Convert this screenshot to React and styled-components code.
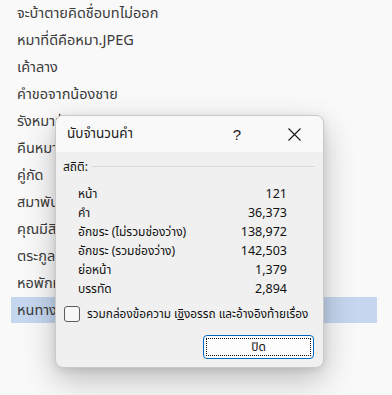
import React from "react";
import styled, { createGlobalStyle } from "styled-components";

const Global = createGlobalStyle`
  html, body { margin: 0; padding: 0; background: #f9f9f9; }
  body { font-family: "Noto Sans", "Noto Sans Thai", "Leelawadee UI", Tahoma, sans-serif; }
`;

const Page = styled.div`
  position: relative;
  width: 392px;
  height: 395px;
  overflow: hidden;
  background: #f9f9f9;
`;

const List = styled.ul`
  list-style: none;
  margin: 0;
  padding: 0 15px 0 11px;
  display: flex;
  flex-direction: column;
`;

const Item = styled.li`
  height: ${(p) => (p.$selected ? 26 : 27)}px;
  display: flex;
  align-items: center;
  padding-left: 6px;
  font-size: 14.5px;
  color: #3b3b3b;
  background: ${(p) => (p.$selected ? "#c5d7ef" : "transparent")};
  box-sizing: border-box;
`;

const Dialog = styled.div`
  position: absolute;
  left: 55px;
  top: 115px;
  width: 269px;
  height: 253px;
  box-sizing: border-box;
  border: 1px solid #c9c9c9;
  border-radius: 8px;
  background: #f0f0f0;
  box-shadow: 0 12px 32px rgba(0, 0, 0, 0.24), 0 2px 8px rgba(0, 0, 0, 0.1);
  display: flex;
  flex-direction: column;
  overflow: hidden;
`;

const TitleBar = styled.div`
  height: 36px;
  flex: none;
  background: #f9f9f9;
  display: flex;
  align-items: center;
  padding-left: 11px;
`;

const Title = styled.div`
  flex: 1;
  font-size: 13.5px;
  color: #1a1a1a;
`;

const TitleButton = styled.div`
  width: 46px;
  height: 36px;
  display: flex;
  align-items: center;
  justify-content: center;
  color: #1a1a1a;
  font-family: "Liberation Sans", sans-serif;
  font-size: 15px;
  margin-right: ${(p) => p.$mr}px;
`;

const Body = styled.div`
  flex: 1;
  display: flex;
  flex-direction: column;
  padding: 6px 8px 8px 7px;
`;

const SectionHeader = styled.div`
  display: flex;
  align-items: center;
  gap: 4px;
  height: 17px;
  font-size: 12px;
  color: #111;
  &::after {
    content: "";
    flex: 1;
    height: 1px;
    background: #d9d9d9;
  }
`;

const Stats = styled.div`
  display: flex;
  flex-direction: column;
  padding: 9px 28px 0 15px;
`;

const StatRow = styled.div`
  display: flex;
  justify-content: space-between;
  align-items: center;
  height: 19px;
  font-size: 12px;
  color: #111;
`;

const Num = styled.span`
  font-family: "Noto Sans", "Open Sans", sans-serif;
  font-size: 12.5px;
`;

const CheckRow = styled.label`
  display: flex;
  align-items: center;
  gap: 7px;
  margin-top: 7px;
  padding-left: 1px;
  font-size: 11.8px;
  color: #111;
  white-space: nowrap;
`;

const Box = styled.span`
  width: 16px;
  height: 16px;
  box-sizing: border-box;
  border: 1px solid #5b5b5b;
  border-radius: 3px;
  background: #f7f7f7;
  flex: none;
`;

const Under = styled.span`
  text-decoration: underline;
`;

const Footer = styled.div`
  display: flex;
  justify-content: flex-end;
  margin-top: auto;
  padding-right: 1px;
`;

const Button = styled.div`
  width: 111px;
  height: 24px;
  box-sizing: border-box;
  border: 1px solid #0067c0;
  border-radius: 4px;
  background: #fdfdfd;
  padding: 2px;
  display: flex;
`;

const Focus = styled.span`
  flex: 1;
  border: 1px dotted #111;
  display: flex;
  align-items: center;
  justify-content: center;
  font-size: 12px;
  color: #111;
`;

const items = [
  "จะบ้าตายคิดชื่อบทไม่ออก",
  "หมาที่ดีคือหมา.JPEG",
  "เค้าลาง",
  "คำขอจากน้องชาย",
  "รังหมาป่า",
  "คืนหมาป่า",
  "คู่กัด",
  "สมาพันธ์",
  "คุณมีสิทธิ์",
  "ตระกูลหมา",
  "หอพักหมา",
  "หนทางสู่ความตาย",
];

const stats = [
  ["หน้า", "121"],
  ["คำ", "36,373"],
  ["อักขระ (ไม่รวมช่องว่าง)", "138,972"],
  ["อักขระ (รวมช่องว่าง)", "142,503"],
  ["ย่อหน้า", "1,379"],
  ["บรรทัด", "2,894"],
];

export default function App() {
  return (
    <Page>
      <Global />
      <List>
        {items.map((t, i) => (
          <Item key={i} $selected={i === 11}>
            {t}
          </Item>
        ))}
      </List>
      <Dialog>
        <TitleBar>
          <Title>นับจำนวนคำ</Title>
          <TitleButton $mr={11}>?</TitleButton>
          <TitleButton $mr={6}>
            <svg width="13" height="13" viewBox="0 0 13 13">
              <path d="M0.5 0.5 L12.5 12.5 M12.5 0.5 L0.5 12.5" stroke="#1a1a1a" strokeWidth="1.1" fill="none" />
            </svg>
          </TitleButton>
        </TitleBar>
        <Body>
          <SectionHeader>สถิติ:</SectionHeader>
          <Stats>
            {stats.map(([k, v]) => (
              <StatRow key={k}>
                <span>{k}</span>
                <Num>{v}</Num>
              </StatRow>
            ))}
          </Stats>
          <CheckRow>
            <Box />
            <span>
              รวมกล่องข้อความ เ<Under>ชิ</Under>งอรรถ และอ้างอิงท้ายเรื่อง
            </span>
          </CheckRow>
          <Footer>
            <Button>
              <Focus>ปิด</Focus>
            </Button>
          </Footer>
        </Body>
      </Dialog>
    </Page>
  );
}
